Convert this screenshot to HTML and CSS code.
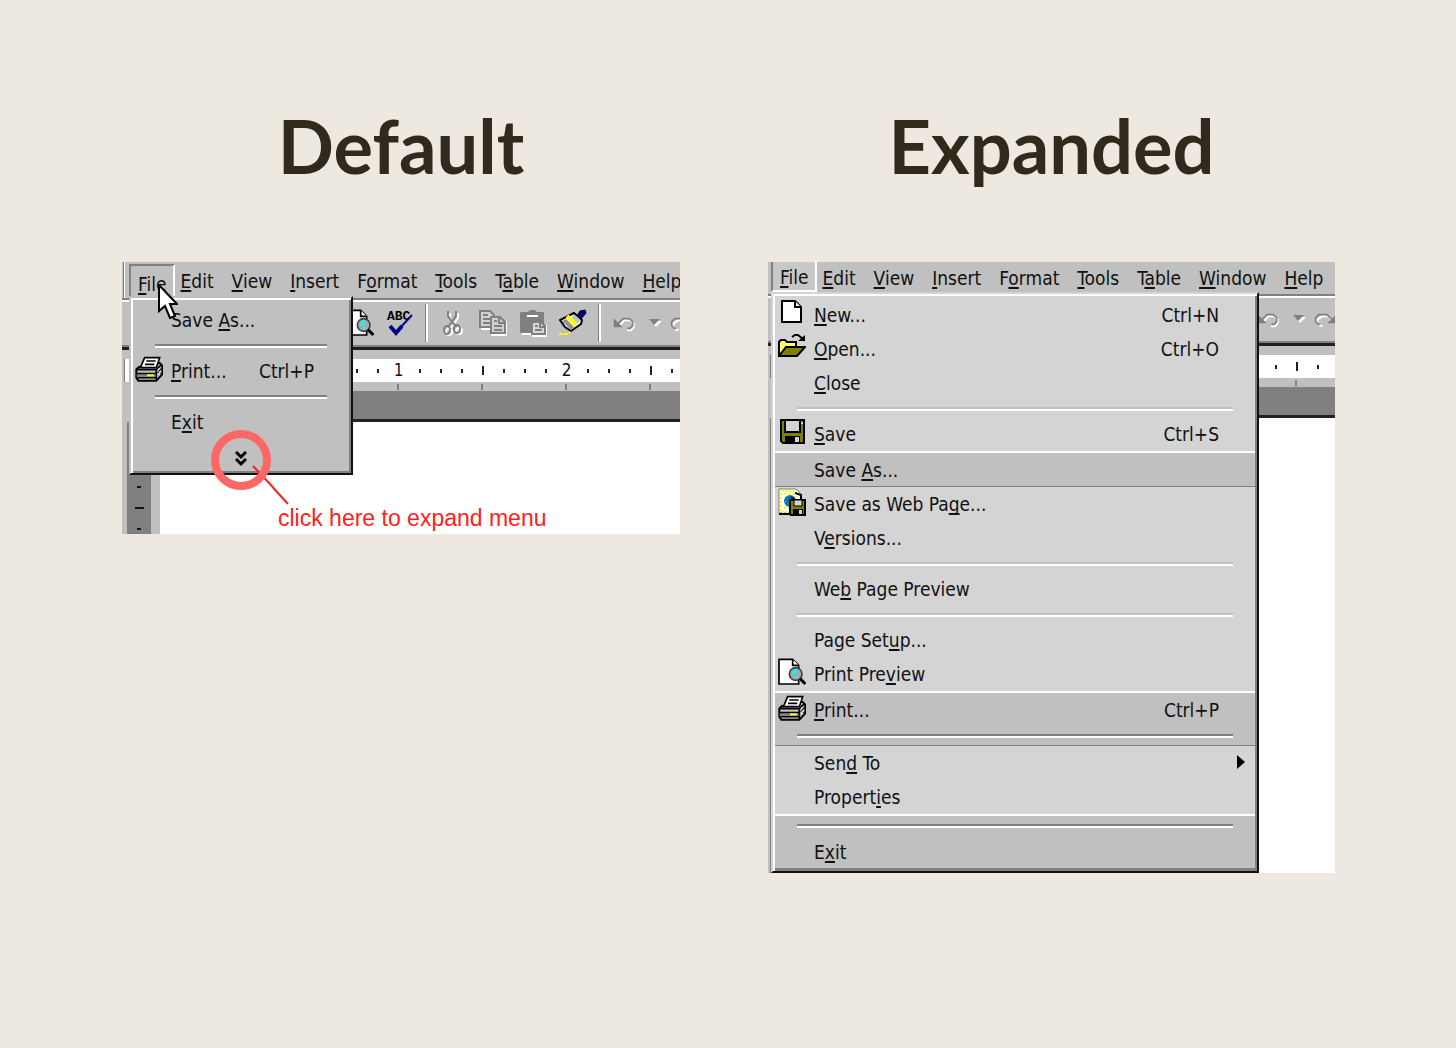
FILE: index.html
```html
<!DOCTYPE html>
<html lang="en">

<head>
    <meta charset="UTF-8">
    <meta name="viewport" content="width=device-width, initial-scale=1.0">
    <title>Default and expanded menus</title>
    <link rel="stylesheet" href="styles.css">
</head>

<body>

    <!-- Icons used more than once -->
    <svg class="sprite" aria-hidden="true">
        <symbol id="icon-printer" viewBox="0 0 84 84">
            <path d="M14 34 L4 43 V68 L10 77 H64 L82 58 V32 L74 24 H66" fill="#c0c0c0" stroke="#000" stroke-width="6" />
            <path d="M29 8 H74 L64 38 H16 Z" fill="#fff" stroke="#000" stroke-width="5" />
            <path d="M34 18 H62 M30 28 H58" stroke="#000" stroke-width="5" />
            <path d="M5 44 H64 L80 28 M5 56 H64 M64 44 V76 M8 68 H64" fill="none" stroke="#000" stroke-width="5" />
            <path d="M5 62 H62" stroke="#808080" stroke-width="6" />
            <path d="M68 40 L80 50 M68 54 L80 38 M70 60 L80 54" stroke="#000" stroke-width="3" />
            <path d="M70 44 l4 -4 M74 52 l4 -4 M70 60 l4 -4" stroke="#fff" stroke-width="4" />
            <path d="M36 61 H56" stroke="#ff0" stroke-width="6" />
        </symbol>
        <symbol id="icon-preview" viewBox="0 0 84 84">
            <path d="M3 4 H44 L62 22 V78 H3 Z" fill="#fff" stroke="#000" stroke-width="5" />
            <path d="M44 4 V22 H62" fill="#fff" stroke="#000" stroke-width="5" />
            <circle cx="53" cy="48" r="19" fill="#a8a8a8" stroke="#404040" stroke-width="5" />
            <path d="M43 45 h8 v-7 h6 M52 57 h7" fill="none" stroke="#0ff" stroke-width="7" />
            <path d="M66 62 L82 78" stroke="#000" stroke-width="9" />
        </symbol>
        <symbol id="icon-undo" viewBox="0 0 84 84">
            <g transform="translate(3 3)" fill="none" stroke="#fff" stroke-width="6">
                <path d="M20 46 L34 31 H52 L62 40 V52 L54 61 H42" />
            </g>
            <path d="M18 44 L33 29 H52 L62 38 V50 L54 58 H46" fill="none" stroke="#808080" stroke-width="5" />
            <path d="M5 28 V55 H32 Z" fill="#808080" />
        </symbol>
        <symbol id="icon-redo" viewBox="0 0 84 84">
            <path d="M68 47 L54 34 H36 L22 44 V54 L30 62 H38" fill="none" stroke="#fff" stroke-width="6" />
            <path d="M66 44 L51 29 H26 L17 38 V50 L25 58 H31" fill="none" stroke="#808080" stroke-width="5" />
            <path d="M79 28 V55 H52 Z" fill="#808080" />
        </symbol>
        <symbol id="icon-down" viewBox="0 0 14 10">
            <path d="M3 3 H14 L8 9 Z" fill="#fff" />
            <path d="M1 1 H12 L6 7 Z" fill="#808080" />
        </symbol>
    </svg>

    <main class="comparison">

        <section class="example">
            <h2>Default</h2>
            <div class="window window-default">
                <div class="app">
                    <nav class="menubar">
                        <button class="pressed"><u>F</u>ile</button>
                        <button><u>E</u>dit</button>
                        <button><u>V</u>iew</button>
                        <button><u>I</u>nsert</button>
                        <button>F<u>o</u>rmat</button>
                        <button><u>T</u>ools</button>
                        <button>T<u>a</u>ble</button>
                        <button><u>W</u>indow</button>
                        <button><u>H</u>elp</button>
                    </nav>
                    <div class="toolbar">
                        <button aria-label="Print preview"><svg class="icon"><use href="#icon-preview" /></svg></button>
                        <button aria-label="Spelling">
                            <svg class="icon" viewBox="0 0 28 28">
                                <text class="abc" x="1" y="11">ABC</text>
                                <path d="M4 17 L10 24 L16 17" fill="none" stroke="#000080" stroke-width="4" />
                                <path d="M14 19 L26 6" stroke="#0000a0" stroke-width="2" />
                            </svg>
                        </button>
                        <span class="divider"></span>
                        <button aria-label="Cut">
                            <svg class="icon" viewBox="0 0 28 28">
                                <g fill="none" stroke="#fff" stroke-width="2" transform="translate(2 2)">
                                    <path d="M9 2 V7 L14 14 L18 19 M17 2 V7 L12 14 L9 18" />
                                    <circle cx="8" cy="21" r="3" />
                                    <circle cx="18" cy="20" r="3" />
                                </g>
                                <g fill="none" stroke="#808080" stroke-width="2">
                                    <path d="M9 2 V7 L14 14 L18 18 M17 2 V7 L12 14 L9 18" />
                                    <ellipse cx="8" cy="21" rx="3" ry="4" />
                                    <ellipse cx="18" cy="20" rx="3" ry="4" />
                                </g>
                            </svg>
                        </button>
                        <button aria-label="Copy">
                            <svg class="icon" viewBox="0 0 28 28">
                                <path d="M2 20 H12 M12 26 H28 V12" fill="none" stroke="#fff" stroke-width="2" />
                                <path d="M1 2 H11 L15 6 V18 H1 Z" fill="#d0d0d0" stroke="#808080" stroke-width="2" />
                                <path d="M4 6 H9 M4 10 H12 M4 14 H12" stroke="#808080" stroke-width="2" />
                                <path d="M12 8 H21 L26 13 V24 H12 Z" fill="#d0d0d0" stroke="#808080" stroke-width="2" />
                                <path d="M20 8 V14 H26 M15 12 H18 M15 17 H23 M15 21 H23" fill="none" stroke="#808080" stroke-width="2" />
                            </svg>
                        </button>
                        <button aria-label="Paste">
                            <svg class="icon" viewBox="0 0 28 28">
                                <path d="M3 25 H14 V27 H28 V16" fill="none" stroke="#fff" stroke-width="2" />
                                <path d="M2 3 H9 L11 1 H16 L18 3 H25 V24 H2 L1 23 V4 Z" fill="#808080" />
                                <path d="M8 7 H19" stroke="#fff" stroke-width="2" />
                                <path d="M13 13 H22 L26 17 V25 H13 Z" fill="#d8d8d8" stroke="#808080" stroke-width="2" />
                                <path d="M21 13 V18 H26 M16 17 H19 M16 21 H23" fill="none" stroke="#808080" stroke-width="2" />
                            </svg>
                        </button>
                        <button aria-label="Format painter">
                            <svg class="icon" viewBox="0 0 28 28">
                                <path d="M18 7 L21 2 L26 1 L27 4 L22 10 Z" fill="#000080" stroke="#000" />
                                <path d="M11 6 L15 4 L23 11 L22 15 L12 22 L6 18 L1 11 Z" fill="#fff" stroke="#000" stroke-width="2" />
                                <path d="M3 12 L7 10 L15 18 L12 21 Z" fill="#909090" />
                                <path d="M8 7 L17 16" stroke="#ff0" stroke-width="4" />
                                <path d="M14 7 L20 13" stroke="#c0c0c0" stroke-width="4" />
                                <path d="M0 25 H9 L12 23" fill="none" stroke="#ff0" stroke-width="2" stroke-dasharray="4 1" />
                            </svg>
                        </button>
                        <span class="divider"></span>
                        <button aria-label="Undo"><svg class="icon"><use href="#icon-undo" /></svg></button>
                        <button aria-label="Undo list" class="drop"><svg><use href="#icon-down" /></svg></button>
                        <button aria-label="Redo"><svg class="icon"><use href="#icon-redo" /></svg></button>
                    </div>
                    <div class="ruler">
                        <i></i><i></i><span>1</span><i></i><i></i><i></i><i class="half"></i><i></i><i></i><i></i><span>2</span><i></i><i></i><i></i><i class="half"></i><i></i>
                    </div>
                    <div class="tabs"></div>
                    <div class="workspace"></div>
                    <div class="document">
                        <div class="side-ruler"><i></i><i class="half"></i><i></i></div>
                        <div class="paper"></div>
                    </div>
                </div>

                <div class="menu">
                    <button class="item"><span class="label">Save <u>A</u>s...</span></button>
                    <hr>
                    <button class="item">
                        <svg class="icon"><use href="#icon-printer" /></svg>
                        <span class="label"><u>P</u>rint...</span>
                        <span class="keys">Ctrl+P</span>
                    </button>
                    <hr>
                    <button class="item"><span class="label">E<u>x</u>it</span></button>
                    <button class="expand" aria-label="Expand menu">
                        <svg viewBox="0 0 12 16"><path d="M1 1 L6 6 L11 1 M1 8 L6 13 L11 8" fill="none" stroke="#000" stroke-width="3" /></svg>
                    </button>
                </div>

                <svg class="pointer" viewBox="0 0 20 36">
                    <path d="M1 1 V27 L7 22 L12 34 L17 32 L12 20 H19 Z" fill="#fff" stroke="#000" stroke-width="2" />
                </svg>
                <svg class="ring" viewBox="0 0 80 80">
                    <path d="M43 37 L60 55 L67 63 L78 75" fill="none" stroke="#ff2020" stroke-width="2" />
                    <circle cx="31" cy="31" r="26" fill="none" stroke="#ff6666" stroke-width="8" />
                </svg>
                <p class="note">click here to expand menu</p>
            </div>
        </section>

        <section class="example">
            <h2>Expanded</h2>
            <div class="window window-expanded">
                <div class="app">
                    <nav class="menubar">
                        <button class="pressed"><u>F</u>ile</button>
                        <button><u>E</u>dit</button>
                        <button><u>V</u>iew</button>
                        <button><u>I</u>nsert</button>
                        <button>F<u>o</u>rmat</button>
                        <button><u>T</u>ools</button>
                        <button>T<u>a</u>ble</button>
                        <button><u>W</u>indow</button>
                        <button><u>H</u>elp</button>
                    </nav>
                    <div class="toolbar">
                        <button aria-label="Undo"><svg class="icon"><use href="#icon-undo" /></svg></button>
                        <button aria-label="Undo list" class="drop"><svg><use href="#icon-down" /></svg></button>
                        <button aria-label="Redo"><svg class="icon"><use href="#icon-redo" /></svg></button>
                    </div>
                    <div class="ruler">
                        <i></i><i class="half"></i><i></i>
                    </div>
                    <div class="tabs"></div>
                    <div class="workspace"></div>
                    <div class="document">
                        <div class="side-ruler"></div>
                        <div class="paper"></div>
                    </div>
                </div>

                <div class="menu">
                    <button class="item">
                        <svg class="icon" viewBox="0 0 28 28">
                            <path d="M4 2 H17 L23 8 V23 H4 Z" fill="#fff" stroke="#000" stroke-width="2" />
                            <path d="M17 2 V8 H23" fill="#fff" stroke="#000" stroke-width="2" />
                        </svg>
                        <span class="label"><u>N</u>ew...</span>
                        <span class="keys">Ctrl+N</span>
                    </button>
                    <button class="item">
                        <svg class="icon" viewBox="0 0 28 28">
                            <path d="M1 23 V9 L3 7 H7 L9 9 H18 V14" fill="#ffff66" stroke="#000" stroke-width="2" />
                            <path d="M1 23 L8 14 H27 L19 23 Z" fill="#808000" stroke="#000" stroke-width="2" />
                            <path d="M14 4 L17 2 H20 L25 6" fill="none" stroke="#000" stroke-width="2" />
                            <path d="M27 2 V8 H20 Z" />
                        </svg>
                        <span class="label"><u>O</u>pen...</span>
                        <span class="keys">Ctrl+O</span>
                    </button>
                    <button class="item"><span class="label"><u>C</u>lose</span></button>
                    <hr>
                    <button class="item">
                        <svg class="icon" viewBox="0 0 28 28">
                            <path d="M3 2 H26 V25 H5 L3 23 Z" fill="#808000" stroke="#000" stroke-width="2" />
                            <path d="M7 2 H22 V14 H7 Z" fill="#d4d4d4" stroke="#000" stroke-width="2" />
                            <path d="M7 18 H22 V25 H7 Z" />
                            <path d="M17 19 H21 V24 H17 Z" fill="#d4d4d4" />
                            <path d="M23 4 H25 V6 H23 Z" fill="#d4d4d4" />
                        </svg>
                        <span class="label"><u>S</u>ave</span>
                        <span class="keys">Ctrl+S</span>
                    </button>
                    <div class="recent">
                        <button class="item"><span class="label">Save <u>A</u>s...</span></button>
                    </div>
                    <button class="item">
                        <svg class="icon" viewBox="0 0 28 28">
                            <path d="M1 25 V1 H18 L23 6 V25 Z" fill="#fff" stroke="#808080" />
                            <path d="M3 3 H18 V24 H3 Z" fill="none" stroke="#ff0" stroke-width="2" stroke-dasharray="2 2" />
                            <path d="M6 6 H18 M6 20 H12" stroke="#ff0" stroke-width="2" stroke-dasharray="2 2" />
                            <path d="M1 26 H12 M17 5 L23 7 V11" fill="none" stroke="#000" stroke-width="2" />
                            <circle cx="12" cy="13" r="6" fill="#0080c0" />
                            <path d="M8 10 L12 8 L13 12 L10 17 Z" fill="#008080" />
                            <path d="M12 8 L17 10 L15 14 Z" fill="#000080" />
                            <path d="M12 12 H27 V27 H13 L12 26 Z" fill="#808000" stroke="#000" stroke-width="2" />
                            <path d="M16 12 H24 V18 H16 Z" fill="#d4d4d4" stroke="#000" />
                            <path d="M15 21 H25 V27 H15 Z" />
                            <path d="M21 22 H24 V26 H21 Z" fill="#d4d4d4" />
                        </svg>
                        <span class="label">Save as Web Pa<u>g</u>e...</span>
                    </button>
                    <button class="item"><span class="label">V<u>e</u>rsions...</span></button>
                    <hr>
                    <button class="item"><span class="label">We<u>b</u> Page Preview</span></button>
                    <hr>
                    <button class="item"><span class="label">Page Set<u>u</u>p...</span></button>
                    <button class="item">
                        <svg class="icon"><use href="#icon-preview" /></svg>
                        <span class="label">Print Pre<u>v</u>iew</span>
                    </button>
                    <div class="recent">
                        <button class="item">
                            <svg class="icon"><use href="#icon-printer" /></svg>
                            <span class="label"><u>P</u>rint...</span>
                            <span class="keys">Ctrl+P</span>
                        </button>
                        <hr>
                    </div>
                    <button class="item">
                        <span class="label">Sen<u>d</u> To</span>
                        <svg class="submenu" viewBox="0 0 8 14"><path d="M0 0 L8 7 L0 14 Z" /></svg>
                    </button>
                    <button class="item"><span class="label">Propert<u>i</u>es</span></button>
                    <div class="recent">
                        <hr>
                        <button class="item"><span class="label">E<u>x</u>it</span></button>
                    </div>
                </div>
            </div>
        </section>

    </main>

</body>

</html>
```
FILE: styles.css
```css
* {
    box-sizing: border-box;
}

body {
    margin: 0;
    background-color: #ede8e0;
    font-family: "DejaVu Sans Condensed", "DejaVu Sans", sans-serif;
    font-size: 19px;
    color: #111;
}

button {
    margin: 0;
    padding: 0;
    border: none;
    background: none;
    font: inherit;
    color: inherit;
}

u {
    text-decoration-thickness: 2px;
    text-underline-offset: 2px;
    text-decoration-skip-ink: none;
}

svg {
    display: block;
    flex: none;
}

.sprite {
    position: absolute;
    width: 0;
    height: 0;
}

.icon {
    width: 28px;
    height: 28px;
}

.comparison {
    display: grid;
    grid-template-columns: 558fr 567fr;
    align-items: start;
    gap: 88px;
    padding: 102px 121px 102px 122px;
}

h2 {
    margin: 0 0 72px;
    font-family: Lato, sans-serif;
    font-size: 74px;
    font-weight: bold;
    line-height: 88px;
    text-align: center;
    color: #30291c;
}

/* Window: the app and its open menu share one grid cell */
.window {
    position: relative;
    display: grid;
    overflow: hidden;
    background-color: #c0c0c0;
}

.app,
.menu {
    grid-area: 1 / 1;
}

.app {
    display: flex;
    flex-direction: column;
    min-width: 0;
}

.menubar {
    display: flex;
    height: 36px;
    padding: 2px 0 0 7px;
    overflow: hidden;
    box-shadow: inset 1px 0 #c0c0c0, inset 2px 0 #808080, inset 3px 0 #fff;
}

.menubar button {
    flex: none;
    padding: 0 9px;
    line-height: 34px;
}

.menubar .pressed {
    margin-right: -4px;
    padding: 2px 7px 0;
    border: 2px solid #808080;
    border-right-color: #fff;
    border-bottom: none;
    line-height: 32px;
}

.toolbar {
    display: flex;
    align-items: center;
    gap: 12px;
    height: 52px;
    padding: 0 0 1px 224px;
    overflow: hidden;
    border-top: 2px solid #808080;
    border-bottom: 3px solid #202020;
    box-shadow: inset 0 2px #fff, inset 0 -2px #808080;
}

.toolbar button {
    flex: none;
}

.toolbar .drop {
    margin: 0 -8px 0 -4px;
}

.toolbar .drop svg {
    width: 14px;
    height: 10px;
}

.divider {
    flex: none;
    width: 3px;
    height: 38px;
    margin: 0 -1px;
    border-left: 1px solid #808080;
    border-right: 2px solid #fff;
}

.abc {
    font-family: "Liberation Mono", monospace;
    font-size: 13px;
    font-weight: bold;
}

.ruler {
    display: flex;
    align-items: center;
    height: 23px;
    margin-top: 9px;
    padding-left: 222px;
    overflow: hidden;
    background-color: #fff;
    border-left: 2px solid #c0c0c0;
    box-shadow: inset 1px 0 #808080;
}

.ruler i,
.ruler span {
    display: flex;
    flex: none;
    justify-content: center;
    width: 21px;
    font-size: 17px;
    line-height: 23px;
}

.ruler i::before {
    content: "";
    width: 2px;
    height: 4px;
    background-color: #222;
}

.ruler .half::before {
    height: 9px;
}

.tabs {
    height: 6px;
    margin: 2px 0 1px;
    background: repeating-linear-gradient(to right, #808080 0 2px, transparent 2px 84px) 23px 0;
}

.workspace {
    height: 31px;
    margin-left: 38px;
    background-color: #808080;
    border-bottom: 3px solid #222;
}

.document {
    display: flex;
    flex: 1;
}

.side-ruler {
    width: 24px;
    margin: 0 9px 0 5px;
    padding-top: 54px;
    background-color: #808080;
}

.side-ruler i {
    display: flex;
    align-items: center;
    justify-content: center;
    height: 21px;
}

.side-ruler i::before {
    content: "";
    width: 4px;
    height: 2px;
    background-color: #111;
}

.side-ruler .half::before {
    width: 9px;
}

.paper {
    flex: 1;
    background-color: #fff;
}

/* Menus */
.menu {
    align-self: start;
    justify-self: start;
    z-index: 1;
    padding: 5px 2px 2px;
    background-color: #c0c0c0;
    border: 2px solid #d4d4d4;
    border-right-color: #111;
    border-bottom-color: #111;
    box-shadow: inset 2px 2px #fff, inset -2px -2px #808080;
}

.item {
    display: flex;
    align-items: center;
    width: 100%;
    height: 34px;
    padding: 0 35px 0 38px;
    text-align: left;
    white-space: nowrap;
}

.item .icon {
    margin: 0 8px 4px -36px;
}

.keys {
    margin-left: auto;
}

.submenu {
    width: 8px;
    height: 14px;
    margin: 0 -26px 2px auto;
}

.menu hr {
    height: 17px;
    margin: 0 22px;
    border: none;
    background: linear-gradient(#808080 50%, #fff 50%) center / 100% 4px no-repeat;
}

.expand {
    display: flex;
    align-items: center;
    justify-content: center;
    width: 100%;
    height: 32px;
    padding-top: 8px;
}

.expand svg {
    width: 12px;
    height: 16px;
}

/* Short menu */
.window-default {
    height: 272px;
}

.window-default .menu {
    width: 224px;
    margin: 34px 0 0 7px;
    border-color: #c0c0c0 #111 #111 #c0c0c0;
}

.pointer {
    position: absolute;
    z-index: 2;
    top: 22px;
    left: 36px;
    width: 20px;
    height: 36px;
}

.ring {
    position: absolute;
    z-index: 2;
    top: 167px;
    left: 88px;
    width: 80px;
    height: 80px;
}

.note {
    position: absolute;
    top: 242px;
    left: 156px;
    margin: 0;
    font-family: "Liberation Sans", Arial, sans-serif;
    font-size: 23px;
    line-height: 28px;
    color: #ff2020;
}

/* Full menu */
.window-expanded .menubar {
    height: 32px;
    padding: 0 0 0 3px;
    box-shadow: none;
}

.window-expanded .menubar button {
    line-height: 28px;
}

.window-expanded .menubar .pressed {
    height: 30px;
    padding-top: 0;
    border-top: none;
    border-bottom: 2px solid #fff;
    background-color: #c8c8c8;
    line-height: 30px;
}

.window-expanded .toolbar {
    padding-left: 488px;
}

.window-expanded .ruler {
    padding-left: 495px;
}

.window-expanded .side-ruler {
    width: 1px;
    margin: 0 0 0 2px;
}

.window-expanded .menu {
    width: 488px;
    margin: 30px 0 0 3px;
    padding-top: 4px;
    background-color: #d4d4d4;
}

.window-expanded .item {
    padding-right: 36px;
    padding-left: 39px;
}

.window-expanded .menu hr {
    background-image: linear-gradient(#c0c0c0 50%, #fff 50%);
}

.recent {
    background-color: #c0c0c0;
    border-top: 2px solid #fff;
    border-bottom: 1px solid #808080;
}

.recent .item {
    height: 33px;
}

.window-expanded .recent hr {
    height: 19px;
    background-image: linear-gradient(#808080 50%, #fff 50%);
}
```
